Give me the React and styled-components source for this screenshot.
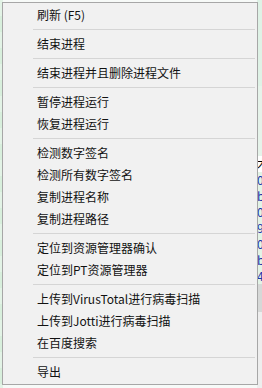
import React from 'react';
import styled, { createGlobalStyle } from 'styled-components';

const Global = createGlobalStyle`
  html, body {
    margin: 0;
    padding: 0;
    background: #ffffff;
  }
  body {
    font-family: "Noto Sans CJK SC", "Noto Sans", sans-serif;
  }
`;

// page behind the menu (a process list)
const Page = styled.div`
  position: relative;
  width: 262px;
  height: 388px;
  overflow: hidden;
  background: #ffffff;
`;

const Backdrop = styled.div`
  display: grid;
  grid-template-columns: 3px 1fr 5px;
  height: 100%;
`;

const SideCol = styled.div`
  display: flex;
  flex-direction: column;
  background: ${p => p.$bg};
`;

const Cell = styled.div`
  height: 16px;
  flex: none;
  font-size: 12px;
  line-height: 16px;
  color: ${p => p.$color || '#2233aa'};
  background: ${p => p.$bg || 'transparent'};
  overflow: hidden;
  white-space: nowrap;
`;

const Gap = styled.div`
  height: ${p => p.$h}px;
  flex: none;
  background: ${p => p.$bg};
`;

const MidCol = styled.div`
  background: #f7faf8;
`;

// the context menu lies over the list
const Menu = styled.ul`
  position: absolute;
  left: 2px;
  top: 2px;
  width: 254px;
  margin: 0;
  padding: 1px 0 1px;
  list-style: none;
  background: #f1f1f1;
  border: 1px solid #a7a7a7;
  box-sizing: content-box;
`;

const Item = styled.li`
  height: 22px;
  padding-left: 34px;
  font-size: 12px;
  line-height: 22px;
  color: #111;
  white-space: nowrap;
  cursor: default;
  &:hover {
    background: #dbe8f6;
  }
`;

const Separator = styled.li`
  height: 1px;
  margin: 3px 2px 3px 30px;
  background: #d5d5d5;
`;

const groups = [
  ['刷新 (F5)'],
  ['结束进程'],
  ['结束进程并且删除进程文件'],
  ['暂停进程运行', '恢复进程运行'],
  ['检测数字签名', '检测所有数字签名', '复制进程名称', '复制进程路径'],
  ['定位到资源管理器确认', '定位到PT资源管理器'],
  ['上传到VirusTotal进行病毒扫描', '上传到Jotti进行病毒扫描', '在百度搜索'],
  ['导出'],
];

const rightCells = [
  { t: '木', bg: '#ffffff', c: '#000' }, { t: '0', bg: '#e2f3e6' }, { t: 'b', bg: '#e2f3e6' },
  { t: '0', bg: '#e2f3e6' }, { t: '9', bg: '#e2f3e6' }, { t: '0', bg: '#e2f3e6' },
  { t: 'b', bg: '#e2f3e6' }, { t: '4', bg: '#e2f3e6' },
];

const leftCells = Array.from({ length: 25 }, (_, i) => ({
  bg: i % 2 ? '#d8efdc' : '#e3f3e6',
}));

export default function App() {
  return (
    <Page>
      <Global />
      <Backdrop>
        <SideCol $bg="#e3f3e6">
          {leftCells.map((c, i) => (
            <Cell key={i} $bg={c.bg} />
          ))}
        </SideCol>
        <MidCol />
        <SideCol $bg="#e6f3ea">
          <Gap $h={86} $bg="#dff2e6" />
          <Gap $h={70} $bg="#e6f3ea" />
          {rightCells.map((c, i) => (
            <Cell key={i} $bg={c.bg} $color={c.c}>{c.t}</Cell>
          ))}
          <Gap $h={28} $bg="#d6d8d7" />
          <Gap $h={80} $bg="#eeeeee" />
        </SideCol>
      </Backdrop>
      <Menu>
        {groups.map((g, gi) => (
          <React.Fragment key={gi}>
            {gi > 0 && <Separator />}
            {g.map(label => (
              <Item key={label}>{label}</Item>
            ))}
          </React.Fragment>
        ))}
      </Menu>
    </Page>
  );
}
